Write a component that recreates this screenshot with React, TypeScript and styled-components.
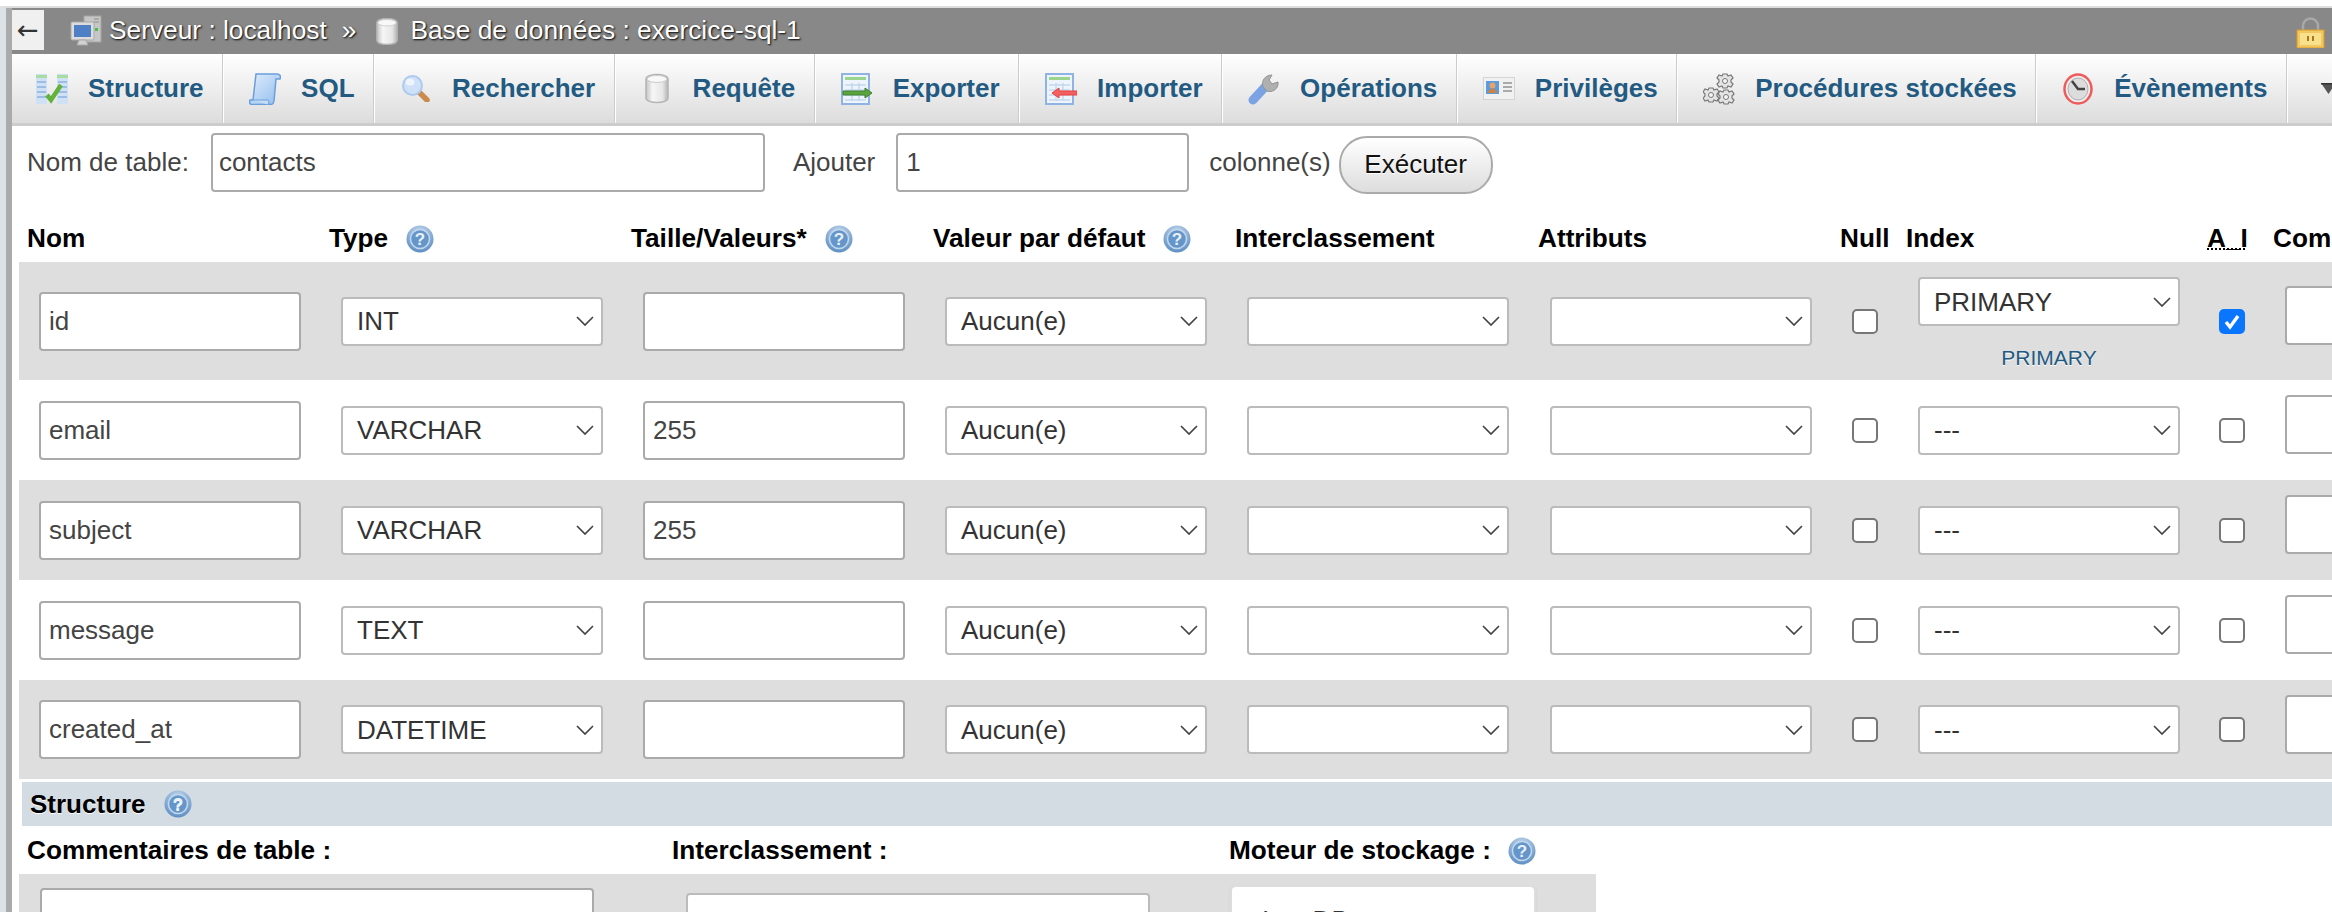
import React from 'react';
import styled, { createGlobalStyle } from 'styled-components';

const chevron = encodeURIComponent(
  '<svg xmlns="http://www.w3.org/2000/svg" width="18" height="10" viewBox="0 0 18 10"><path d="M1 1l8 8 8-8" fill="none" stroke="#444" stroke-width="1.700"/></svg>'
);
const tick = encodeURIComponent(
  '<svg xmlns="http://www.w3.org/2000/svg" width="26" height="25" viewBox="0 0 26 25"><path d="M7 13l4 5 8-11" fill="none" stroke="#fff" stroke-width="3.4"/></svg>'
);

const GlobalStyle = createGlobalStyle`
  html, body {
    margin: 0;
    width: 2332px;
    height: 912px;
    overflow: hidden;
    background: #fff;
  }
  body {
    font-family: "Liberation Sans", Arial, sans-serif;
    font-size: 26px;
    color: #444;
  }
`;

const Shell = styled.div`
  margin-top: 6px;
  height: 904px;
  border-top: 2px solid #ddd;
  border-left: 6px solid #dde2e6;
`;

const Main = styled.div`
  height: 100%;
  border-left: 6px solid #aaa;
`;

const TopBar = styled.div`
  display: flex;
  align-items: center;
  height: 46px;
  background: #888;
  color: #fff;
  font-size: 26.3px;
  text-shadow: 1px 1px 2px #000;
`;

const BackButton = styled.div`
  align-self: flex-start;
  display: flex;
  align-items: center;
  justify-content: center;
  width: 32px;
  height: 40px;
  margin: 2px 26px 0 0;
  background: #f0f0f0;
  color: #333;
  font-family: "DejaVu Sans", sans-serif;
  font-size: 26px;
  text-shadow: none;
`;

const Crumb = styled.span<{ $gap: number }>`
  display: flex;
  align-items: center;
  gap: ${(p) => p.$gap}px;
`;

const CrumbLabel = styled.span`
  margin-top: -2px;
`;

const CrumbSep = styled.span`
  margin: -2px 19px 0 15px;
`;

const LockSlot = styled.span`
  display: flex;
  margin: 2px 7px 0 auto;
`;

const Tabs = styled.div`
  display: flex;
  height: 72px;
  box-sizing: border-box;
  border-bottom: 3px solid #ccc;
  background: linear-gradient(#fff, #dcdcdc);
`;

const Tab = styled.a`
  display: flex;
  align-items: center;
  gap: 20px;
  padding: 0 19.5px 0 25px;
  border-right: 1px solid #fff;
  box-shadow: inset -1px 0 0 #ccc;
  color: #235a81;
  font-weight: bold;
  white-space: nowrap;
  &:first-child {
    padding-left: 24px;
  }
`;

const TabIconSlot = styled.span`
  display: flex;
  width: 32px;
  height: 32px;
  align-items: center;
  justify-content: center;
`;

const FormRow = styled.div`
  display: flex;
  align-items: center;
  height: 88px;
  padding: 0 0 16px 15px;
  box-sizing: border-box;
`;

const FormLabel = styled.label<{ $gap: number }>`
  margin-right: ${(p) => p.$gap}px;
`;

const Field = styled.input`
  display: block;
  box-sizing: border-box;
  width: 262px;
  height: 59px;
  padding: 0 8px;
  border: 2px solid #aaa;
  border-radius: 4px;
  background: #fff;
  color: #444;
  font: inherit;
  outline: none;
`;

const TableNameField = styled(Field)`
  width: 554px;
  margin-right: 28px;
  padding-left: 6px;
`;

const ColumnCountField = styled(Field)`
  width: 293px;
  margin-right: 20px;
`;

const CommentField = styled(Field)`
  margin-bottom: 11px;
`;

const WideField = styled(Field)`
  width: 554px;
`;

const RunButton = styled.button`
  box-sizing: border-box;
  width: 154px;
  height: 58px;
  margin: 5px 0 0 8px;
  border: 2px solid #aaa;
  border-radius: 28px;
  background: linear-gradient(#fff, #ddd);
  color: #111;
  font: inherit;
  text-shadow: 0 1px 0 #fff;
`;

const Select = styled.select<{ $width?: number }>`
  display: block;
  box-sizing: border-box;
  appearance: none;
  width: ${(p) => p.$width ?? 262}px;
  height: 49px;
  padding: 0 30px 0 14px;
  border: 2px solid #bbb;
  border-radius: 4px;
  background: #fff url("data:image/svg+xml,${chevron}") no-repeat right 7px center;
  color: #333;
  font: inherit;
  outline: none;
`;

const EngineSelect = styled(Select)`
  height: 70px;
  padding-left: 30px;
  border-color: #ddd;
  border-radius: 6px;
  box-shadow: 0 1px 2px #ccc;
`;

const Grid = styled.table`
  width: 2313px;
  margin-left: 7px;
  table-layout: fixed;
  border-collapse: collapse;
`;

const GridCol = styled.col<{ $width: number }>`
  width: ${(p) => p.$width}px;
`;

const HeadCell = styled.th`
  height: 48px;
  padding: 1px 0 0 8px;
  box-sizing: border-box;
  color: #000;
  font-size: 26.2px;
  font-weight: bold;
  text-align: left;
  white-space: nowrap;
`;

const Row = styled.tr<{ $height: number; $shaded: boolean }>`
  height: ${(p) => p.$height}px;
  background: ${(p) => (p.$shaded ? '#dedede' : '#fff')};
`;

const Cell = styled.td`
  padding: 0 0 0 20px;
  vertical-align: middle;
  overflow: visible;
`;

const HeadInner = styled.span`
  display: inline-flex;
  align-items: center;
  gap: 18px;
`;

const AutoIncrement = styled.abbr`
  text-decoration: underline dotted;
  text-decoration-thickness: 2px;
`;

const IndexLink = styled.a`
  display: block;
  width: 262px;
  margin: 21px 0 -3px;
  color: #235a81;
  font-size: 21px;
  line-height: 21px;
  text-align: center;
  text-shadow: 0 1px 0 #fff;
`;

const Tick = styled.input`
  display: block;
  box-sizing: border-box;
  appearance: none;
  width: 26px;
  height: 25px;
  margin: 0;
  border: 2px solid #777;
  border-radius: 5px;
  background: #fff;
  &:checked {
    border: 0;
    background: #0a75ff url("data:image/svg+xml,${tick}") no-repeat center;
  }
`;

const SectionBar = styled.div`
  display: flex;
  align-items: center;
  gap: 18px;
  height: 44px;
  margin: 3px 0 0 10px;
  padding-left: 8px;
  background: #d3dbe3;
  color: #000;
  font-weight: bold;
  text-shadow: 0 1px 0 #fff;
`;

const OptionsGrid = styled.div`
  display: grid;
  grid-template-columns: 645px 557px 375px;
  margin-left: 7px;
  width: 1577px;
`;

const OptionsHead = styled.div`
  display: flex;
  align-items: center;
  gap: 17px;
  height: 48px;
  padding: 1px 0 0 8px;
  box-sizing: border-box;
  color: #000;
  font-size: 26.2px;
  font-weight: bold;
`;

const OptionsCell = styled.div<{ $top: number; $left: number }>`
  height: 60px;
  padding: ${(p) => p.$top}px 0 0 ${(p) => p.$left}px;
  background: #dedede;
  overflow: hidden;
`;

const HelpIcon = () => (
  <svg width="28" height="28" viewBox="0 0 28 28">
    <defs>
      <radialGradient id="helpRim" cx="50%" cy="30%" r="75%">
        <stop offset="0" stopColor="#d0e0f1" />
        <stop offset="1" stopColor="#5488bf" />
      </radialGradient>
    </defs>
    <circle cx="14" cy="14" r="13.5" fill="url(#helpRim)" />
    <circle cx="14" cy="14" r="9.5" fill="#6596ca" stroke="#c3d8ed" strokeWidth="1.5" />
    <text x="14" y="20" textAnchor="middle" fontFamily="Liberation Sans" fontWeight="bold" fontSize="17" fill="#e8f0f8">?</text>
  </svg>
);

const Cylinder = ({ width }: { width: number }) => (
  <svg width={width} height="31" viewBox="0 0 26 31">
    <defs>
      <linearGradient id="cyl" x1="0" x2="1" y1="0" y2="0">
        <stop offset="0" stopColor="#c4c4c4" />
        <stop offset=".3" stopColor="#f6f6f6" />
        <stop offset=".75" stopColor="#e6e6e6" />
        <stop offset="1" stopColor="#b4b4b4" />
      </linearGradient>
    </defs>
    <path d="M2 6c0-6 22-6 22 0v19c0 6-22 6-22 0z" fill="url(#cyl)" stroke="#b4b4b4" strokeWidth="1.500" />
    <ellipse cx="13" cy="6" rx="10" ry="3.500" fill="#f8f8f8" stroke="#ccc" />
  </svg>
);

const ServerIcon = () => (
  <svg width="32" height="32" viewBox="0 0 32 32">
    <rect x="14" y="1" width="17" height="26" fill="#c6c6c6" stroke="#a4a4a4" />
    <path d="M24 4h5M24 7h5" stroke="#8f8f8f" />
    <rect x="25" y="13" width="3" height="3" fill="#4cc04c" />
    <rect x="1" y="7" width="23" height="18" rx="1" fill="#dcdcdc" stroke="#a8a8a8" />
    <rect x="4" y="10" width="17" height="12" fill="#4f7fc4" />
    <path d="M9 25h7l2 5H7z" fill="#d2d2d2" stroke="#a8a8a8" />
  </svg>
);

const LockIcon = () => (
  <svg width="29" height="31" viewBox="0 0 29 31">
    <path d="M7 14V9a7.500 7.500 0 0115 0v5" fill="none" stroke="#a8a8a8" strokeWidth="2.500" />
    <rect x="1" y="13" width="27" height="18" fill="#f1c75e" stroke="#d99a2c" />
    <rect x="4" y="16" width="21" height="12" fill="#f9e08d" />
    <rect x="11" y="19" width="2" height="5" fill="#a87820" />
    <rect x="16" y="19" width="2" height="5" fill="#a87820" />
  </svg>
);

const StructureIcon = () => (
  <svg width="32" height="30" viewBox="0 0 32 30">
    <rect x="0" y="0" width="11" height="30" fill="#cfe1f5" />
    <rect x="21" y="0" width="11" height="30" fill="#cfe1f5" />
    <path d="M0 1h11v3H0zM21 1h11v3H21z" fill="#a8dca0" />
    <path d="M1 8h9M1 13h9M1 18h9M1 23h9M22 8h9M22 13h9M22 18h9M22 23h9" stroke="#9dbde6" strokeWidth="2" />
    <path d="M11 21l4 5L25 11" fill="none" stroke="#63b23c" strokeWidth="4.500" />
  </svg>
);

const SqlIcon = () => (
  <svg width="32" height="32" viewBox="0 0 32 32">
    <defs>
      <linearGradient id="scroll" x1="0" x2="1" y1="0" y2="1">
        <stop offset="0" stopColor="#e2eefb" />
        <stop offset="1" stopColor="#8fbcee" />
      </linearGradient>
    </defs>
    <path d="M7 1h21c3 0 4 2 3 5h-4l-2 22c-.3 2.500-1.500 3.500-4 3.500H3c-2 0-3-2-2-4.500h3z" fill="url(#scroll)" stroke="#6a9edb" strokeWidth="1.500" />
    <path d="M2 27h17c1 0 1.500 2.500 0 4.500" fill="#c4dcf6" stroke="#6a9edb" />
  </svg>
);

const SearchIcon = () => (
  <svg width="28" height="27" viewBox="0 0 28 27">
    <path d="M17 17l8 8" stroke="#c98b4e" strokeWidth="5.500" strokeLinecap="round" />
    <circle cx="10.500" cy="10.500" r="9.500" fill="#cfe1f8" stroke="#aecaee" strokeWidth="2" />
    <ellipse cx="8" cy="7" rx="4.500" ry="3.500" fill="#edf4fc" />
  </svg>
);

const TableSheet = () => (
  <>
    <rect x="1" y="1" width="27" height="30" fill="#eef4fb" stroke="#8fb4e4" strokeWidth="2" />
    <rect x="4" y="4" width="21" height="3" fill="#9bd48c" />
    <path d="M4 12h21M4 17h21M4 22h21M4 27h21M11 10v18M18 10v18" stroke="#c4d8f0" strokeWidth="1.500" />
  </>
);

const ExportIcon = () => (
  <svg width="32" height="32" viewBox="0 0 32 32">
    <TableSheet />
    <path d="M2 18h22v-3l7 5-7 5v-3H2z" fill="#5ba33c" stroke="#3f8030" />
  </svg>
);

const ImportIcon = () => (
  <svg width="32" height="32" viewBox="0 0 32 32">
    <TableSheet />
    <path d="M32 18H14v-3l-7 5 7 5v-3h18z" fill="#f46060" stroke="#e84040" />
  </svg>
);

const WrenchIcon = () => (
  <svg width="32" height="32" viewBox="0 0 32 32">
    <path d="M5 27L17 14" stroke="#7ba2e2" strokeWidth="9" strokeLinecap="round" />
    <path d="M15 14c-2-6 2-12 9-12l-3 5 3 4 6-2c1 7-6 11-11 9z" fill="#b0b0b0" stroke="#939393" />
  </svg>
);

const CardIcon = () => (
  <svg width="32" height="23" viewBox="0 0 32 23">
    <rect x="0.500" y="0.500" width="31" height="22" fill="#f1f1f1" stroke="#d4d4d4" />
    <rect x="3" y="4" width="13" height="13" fill="#5b9be0" />
    <circle cx="9.500" cy="8.500" r="3" fill="#e6a468" />
    <path d="M5 16c0-6 9-6 9 0z" fill="#c98447" />
    <path d="M20 6h9M20 10h9M20 14h9" stroke="#aaa" strokeWidth="2" />
  </svg>
);

const Gear = ({ x, y }: { x: number; y: number }) => (
  <g transform={`translate(${x} ${y})`}>
    <path d="M-2-7h4l1 2 3-1 2 3-2 2v2l2 2-2 3-3-1-1 2h-4l-1-2-3 1-2-3 2-2v-2l-2-2 2-3 3 1z" fill="#e4e4e4" stroke="#777" strokeWidth="1.200" />
    <circle r="2.500" fill="#f6f6f6" stroke="#777" />
  </g>
);

const GearsIcon = () => (
  <svg width="32" height="32" viewBox="0 0 32 32">
    <Gear x={22} y={8} />
    <Gear x={8} y={22} />
    <Gear x={23} y={24} />
  </svg>
);

const ClockIcon = () => (
  <svg width="30" height="32" viewBox="0 0 30 32">
    <ellipse cx="15" cy="16" rx="13.500" ry="14.500" fill="#eee" stroke="#ef5a5a" strokeWidth="2.500" />
    <ellipse cx="15" cy="16" rx="10" ry="11" fill="#dcdcdc" stroke="#b0b0b0" />
    <path d="M9 8l6 8h7" fill="none" stroke="#444" strokeWidth="2.500" />
  </svg>
);

const MoreIcon = () => (
  <svg width="15" height="11" viewBox="0 0 15 11">
    <path d="M0 0h15L7.500 11z" fill="#555" />
    <path d="M0 0h15v1.500H0z" fill="#333" />
  </svg>
);

const tabs = [
  { label: 'Structure', icon: <StructureIcon /> },
  { label: 'SQL', icon: <SqlIcon /> },
  { label: 'Rechercher', icon: <SearchIcon /> },
  { label: 'Requête', icon: <Cylinder width={26} /> },
  { label: 'Exporter', icon: <ExportIcon /> },
  { label: 'Importer', icon: <ImportIcon /> },
  { label: 'Opérations', icon: <WrenchIcon /> },
  { label: 'Privilèges', icon: <CardIcon /> },
  { label: 'Procédures stockées', icon: <GearsIcon /> },
  { label: 'Évènements', icon: <ClockIcon /> },
];

const columnWidths = [302, 302, 302, 302, 303, 302, 66, 301, 66, 67];

const rows = [
  { name: 'id', type: 'INT', size: '', height: 118, index: 'PRIMARY', ai: true },
  { name: 'email', type: 'VARCHAR', size: '255', height: 100, index: '---', ai: false },
  { name: 'subject', type: 'VARCHAR', size: '255', height: 100, index: '---', ai: false },
  { name: 'message', type: 'TEXT', size: '', height: 100, index: '---', ai: false },
  { name: 'created_at', type: 'DATETIME', size: '', height: 99, index: '---', ai: false },
];

const OneOption = ({ text, width }: { text: string; width?: number }) => (
  <Select $width={width} defaultValue={text}>
    <option>{text}</option>
  </Select>
);

const App: React.FC = () => (
  <>
    <GlobalStyle />
    <Shell>
      <Main>
        <TopBar>
          <BackButton>←</BackButton>
          <Crumb $gap={7}>
            <ServerIcon />
            <CrumbLabel>Serveur : localhost</CrumbLabel>
          </Crumb>
          <CrumbSep>»</CrumbSep>
          <Crumb $gap={11}>
            <Cylinder width={24} />
            <CrumbLabel>Base de données : exercice-sql-1</CrumbLabel>
          </Crumb>
          <LockSlot>
            <LockIcon />
          </LockSlot>
        </TopBar>

        <Tabs>
          {tabs.map((tab) => (
            <Tab key={tab.label}>
              <TabIconSlot>{tab.icon}</TabIconSlot>
              {tab.label}
            </Tab>
          ))}
          <Tab>
            <TabIconSlot>
              <MoreIcon />
            </TabIconSlot>
          </Tab>
        </Tabs>

        <FormRow>
          <FormLabel $gap={22}>Nom de table:</FormLabel>
          <TableNameField defaultValue="contacts" />
          <FormLabel $gap={21}>Ajouter</FormLabel>
          <ColumnCountField defaultValue="1" />
          <span>colonne(s)</span>
          <RunButton>Exécuter</RunButton>
        </FormRow>

        <Grid>
          <colgroup>
            {columnWidths.map((width, i) => (
              <GridCol key={i} $width={width} />
            ))}
          </colgroup>
          <thead>
            <tr>
              <HeadCell>Nom</HeadCell>
              <HeadCell>
                <HeadInner>
                  Type <HelpIcon />
                </HeadInner>
              </HeadCell>
              <HeadCell>
                <HeadInner>
                  Taille/Valeurs* <HelpIcon />
                </HeadInner>
              </HeadCell>
              <HeadCell>
                <HeadInner>
                  Valeur par défaut <HelpIcon />
                </HeadInner>
              </HeadCell>
              <HeadCell>Interclassement</HeadCell>
              <HeadCell>Attributs</HeadCell>
              <HeadCell>Null</HeadCell>
              <HeadCell>Index</HeadCell>
              <HeadCell>
                <AutoIncrement title="AUTO_INCREMENT">A_I</AutoIncrement>
              </HeadCell>
              <HeadCell>Commentaires</HeadCell>
            </tr>
          </thead>
          <tbody>
            {rows.map((row, i) => (
              <Row key={row.name} $height={row.height} $shaded={i % 2 === 0}>
                <Cell>
                  <Field defaultValue={row.name} />
                </Cell>
                <Cell>
                  <OneOption text={row.type} />
                </Cell>
                <Cell>
                  <Field defaultValue={row.size} />
                </Cell>
                <Cell>
                  <OneOption text="Aucun(e)" />
                </Cell>
                <Cell>
                  <OneOption text="" />
                </Cell>
                <Cell>
                  <OneOption text="" />
                </Cell>
                <Cell>
                  <Tick type="checkbox" />
                </Cell>
                <Cell>
                  <OneOption text={row.index} />
                  {row.index === 'PRIMARY' && <IndexLink>PRIMARY</IndexLink>}
                </Cell>
                <Cell>
                  <Tick type="checkbox" defaultChecked={row.ai} />
                </Cell>
                <Cell>
                  <CommentField />
                </Cell>
              </Row>
            ))}
          </tbody>
        </Grid>

        <SectionBar>
          Structure <HelpIcon />
        </SectionBar>

        <OptionsGrid>
          <OptionsHead>Commentaires de table :</OptionsHead>
          <OptionsHead>Interclassement :</OptionsHead>
          <OptionsHead>
            Moteur de stockage : <HelpIcon />
          </OptionsHead>
          <OptionsCell $top={14} $left={21}>
            <WideField />
          </OptionsCell>
          <OptionsCell $top={19} $left={22}>
            <OneOption text="" width={464} />
          </OptionsCell>
          <OptionsCell $top={11} $left={9}>
            <EngineSelect $width={306} defaultValue="InnoDB">
              <option>InnoDB</option>
            </EngineSelect>
          </OptionsCell>
        </OptionsGrid>
      </Main>
    </Shell>
  </>
);

export default App;
